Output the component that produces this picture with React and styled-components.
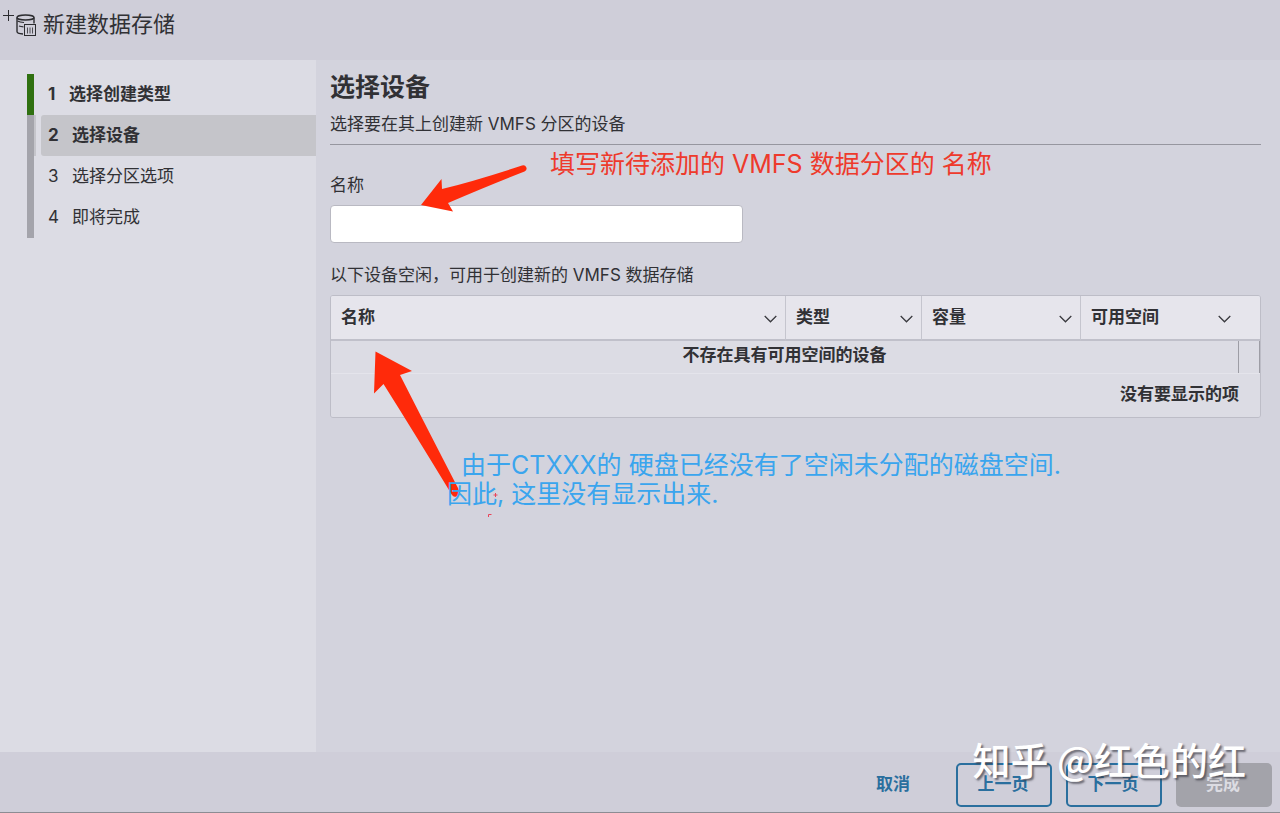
import React from 'react';
import styled, { createGlobalStyle } from 'styled-components';

const GlobalStyle = createGlobalStyle`
  * {
    box-sizing: border-box;
  }

  body {
    margin: 0;
    color: #313135;
    background: #d3d3dd;
    font-family: Inter, "Noto Sans CJK SC", sans-serif;
    font-size: 17px;
    line-height: 24px;
  }

  button,
  input {
    font: inherit;
  }
`;

const StyledPage = styled.div`
  position: relative;
  display: flex;
  flex-direction: column;
  min-height: 100vh;
  overflow: hidden;
`;

const StyledHeader = styled.header`
  display: flex;
  gap: 5px;
  height: 60px;
  padding: 0 2px;
  background: #cfced9;
`;

const StyledTitle = styled.h1`
  margin: 0;
  font-size: 22px;
  font-weight: 400;
  line-height: 48px;
`;

const StyledTitleIcon = styled.svg`
  width: 36px;
  height: 44px;
  fill: none;
  stroke: #2c2c30;
`;

const StyledBody = styled.div`
  display: flex;
  flex: 1;
`;

const StyledSidebar = styled.nav`
  flex: 0 0 316px;
  padding: 14px 0 0 27px;
  background: #dcdce4;
`;

const StyledSteps = styled.ol`
  margin: 0;
  padding: 0;
  list-style: none;
`;

const StyledStep = styled.li`
  display: flex;
  gap: 5px;
  border-left: 7px solid ${props => (props.$done ? '#2f7010' : '#a4a4ab')};

  &::before {
    content: '';
    width: 2px;
    background: ${props => (props.$active ? '#c5c5cb' : 'transparent')};
  }
`;

const StyledStepLabel = styled.div`
  display: flex;
  flex: 1;
  gap: ${props => (props.$done ? '11px' : '14px')};
  padding-left: 7px;
  border-radius: 3px 0 0 3px;
  line-height: 41px;
  font-weight: ${props => (props.$strong ? 700 : 400)};
  background: ${props => (props.$active ? '#c5c5ca' : 'transparent')};
`;

const StyledStepNumber = styled.span`
  width: 10px;
`;

const StyledMain = styled.main`
  flex: 1;
  padding: 9px 19px 0 14px;
`;

const StyledHeading = styled.h2`
  margin: 0;
  font-size: 25px;
  line-height: 36px;
`;

const StyledSubheading = styled.p`
  margin: 0;
  padding: 7px 0 8px;
  border-bottom: 1px solid #96969f;
`;

const StyledField = styled.div`
  display: flex;
  flex-direction: column;
  gap: 8px;
  padding: 28px 0 20px;
`;

const StyledInput = styled.input`
  width: 413px;
  max-width: 100%;
  height: 38px;
  padding: 0 10px;
  border: 1px solid #b9b9c2;
  border-radius: 4px;
  background: #fff;
  outline: none;
`;

const StyledHint = styled.p`
  margin: 0 0 8px;
`;

const StyledGrid = styled.div`
  border: 1px solid #bdbdc7;
  border-radius: 3px;
  overflow: hidden;
`;

const StyledTable = styled.table`
  width: 100%;
  table-layout: fixed;
  border-collapse: separate;
  border-spacing: 0;
  background: #dcdce4;
`;

const StyledTh = styled.th`
  padding: 0 8px 0 10px;
  border-left: ${props => (props.$first ? 'none' : '1px solid #c5c5ce')};
  border-bottom: 2px solid #c0c0ca;
  background: #e6e5ec;
`;

const StyledThInner = styled.div`
  display: flex;
  align-items: center;
  justify-content: space-between;
  height: 43px;
  padding-bottom: 2px;
  padding-right: ${props => (props.$last ? '21px' : '0')};
`;

const StyledChevron = styled.svg`
  width: 13px;
  height: 8px;
  margin-top: 4px;
  fill: none;
  stroke: #3a3a3f;
`;

const StyledEmptyCell = styled.td`
  height: 32px;
  padding: 0 0 4px;
  text-align: center;
  font-weight: 700;
`;

const StyledScrollCell = styled.td`
  border: solid #9d9da5;
  border-width: 0 1px;
`;

const StyledFootCell = styled.td`
  height: 44px;
  padding: 0 21px 3px 0;
  border-top: 1px solid #e4e4eb;
  text-align: right;
  font-weight: 700;
`;

const StyledFooter = styled.footer`
  display: flex;
  justify-content: flex-end;
  gap: 14px;
  padding: 11px 8px 5px;
  border-bottom: 1px solid #8c8c93;
  background: #cfced9;
`;

const StyledButton = styled.button`
  width: 96px;
  height: 44px;
  padding: 0 2px 2px 0;
  border: 2px solid ${props => (props.$outline ? '#2a6f9e' : 'transparent')};
  border-radius: 5px;
  color: #2a6f9e;
  background: transparent;
  font-weight: 600;

  &:disabled {
    color: #dcdce2;
    background: #a3a3aa;
  }
`;

const StyledNote = styled.p`
  position: absolute;
  top: ${props => props.$top}px;
  left: ${props => props.$left}px;
  margin: 0;
  color: ${props => props.$color};
  font-size: 25px;
  font-weight: 400;
  line-height: 29px;
  white-space: pre;
`;

const StyledArrows = styled.svg`
  position: absolute;
  top: 150px;
  left: 360px;
  width: 180px;
  height: 380px;
  pointer-events: none;
`;

const StyledWatermark = styled.div`
  position: absolute;
  right: 34px;
  bottom: 29px;
  color: #fff;
  font-family: "Noto Sans CJK SC", sans-serif;
  font-size: 38px;
  font-weight: 500;
  line-height: 50px;
  text-shadow: 2px 2px 2px rgba(60, 60, 70, 0.7);
  pointer-events: none;
`;

const steps = [
  { label: '选择创建类型', done: true },
  { label: '选择设备', active: true },
  { label: '选择分区选项' },
  { label: '即将完成' },
];

const columns = ['名称', '类型', '容量', '可用空间'];

const TitleIcon = () => (
  <StyledTitleIcon viewBox="0 0 36 44" aria-hidden="true">
    <path d="M1 15.5h11M6.5 10v11" strokeWidth="1" />
    <ellipse cx="23.5" cy="17.5" rx="8.5" ry="2.5" strokeWidth="1.4" />
    <path d="M15 17.5v14c0 1.5 3 2.3 6 2.5M32 17.5v6" strokeWidth="1.4" />
    <path d="M15.5 21c2 1.2 4 1.4 6.5 1.5M17 26c1.5.6 3 .8 4.5.9" strokeWidth="1.2" />
    <rect x="22.5" y="24.5" width="11" height="11" strokeWidth="1" />
    <path d="M25.5 27.5v6M28 27.5v6M30.5 27.5v6" strokeWidth="0.8" />
  </StyledTitleIcon>
);

const Chevron = () => (
  <StyledChevron viewBox="0 0 13 8" aria-hidden="true">
    <path d="M.7 1l5.8 5.8L12.3 1" strokeWidth="1.3" />
  </StyledChevron>
);

const Steps = () => (
  <StyledSidebar>
    <StyledSteps>
      {steps.map((step, i) => (
        <StyledStep key={step.label} $done={step.done} $active={step.active}>
          <StyledStepLabel $done={step.done} $active={step.active} $strong={step.done || step.active}>
            <StyledStepNumber>{i + 1}</StyledStepNumber>
            <span>{step.label}</span>
          </StyledStepLabel>
        </StyledStep>
      ))}
    </StyledSteps>
  </StyledSidebar>
);

const DeviceTable = () => (
  <StyledGrid>
    <StyledTable>
      <colgroup>
        <col />
        <col width="136" />
        <col width="159" />
        <col width="158" />
        <col width="22" />
      </colgroup>
      <thead>
        <tr>
          {columns.map((name, i) => (
            <StyledTh key={name} scope="col" $first={i === 0} colSpan={i === 3 ? 2 : 1}>
              <StyledThInner $last={i === 3}>
                {name}
                <Chevron />
              </StyledThInner>
            </StyledTh>
          ))}
        </tr>
      </thead>
      <tbody>
        <tr>
          <StyledEmptyCell colSpan={4}>不存在具有可用空间的设备</StyledEmptyCell>
          <StyledScrollCell />
        </tr>
      </tbody>
      <tfoot>
        <tr>
          <StyledFootCell colSpan={5}>没有要显示的项</StyledFootCell>
        </tr>
      </tfoot>
    </StyledTable>
  </StyledGrid>
);

const Arrows = () => (
  <StyledArrows viewBox="360 150 180 380" aria-hidden="true">
    <g fill="#ff2a0a">
      <path d="M421 205L441.5 179L442 189Q475 181 522 165.500A3 3 0 0 1 524.5 171.5Q490 185 448 203L453 211.5Z" />
      <path d="M375.5 351.5L412 371L400 375Q428 430 459 490A4 4 0 0 1 452 495Q415 434 383.5 384L374 393.5Z" />
    </g>
    <path d="M493.5 495h4M495.5 493v4M488.5 517v-2.5h3" fill="none" stroke="#e8455a" />
  </StyledArrows>
);

const App = () => (
  <StyledPage>
    <GlobalStyle />
    <StyledHeader>
      <TitleIcon />
      <StyledTitle>新建数据存储</StyledTitle>
    </StyledHeader>

    <StyledBody>
      <Steps />
      <StyledMain>
        <StyledHeading>选择设备</StyledHeading>
        <StyledSubheading>选择要在其上创建新 VMFS 分区的设备</StyledSubheading>
        <StyledField>
          <label htmlFor="name">名称</label>
          <StyledInput id="name" type="text" />
        </StyledField>
        <StyledHint>以下设备空闲，可用于创建新的 VMFS 数据存储</StyledHint>
        <DeviceTable />
      </StyledMain>
    </StyledBody>

    <StyledFooter>
      <StyledButton type="button">取消</StyledButton>
      <StyledButton type="button" $outline>上一页</StyledButton>
      <StyledButton type="button" $outline>下一页</StyledButton>
      <StyledButton type="button" disabled>完成</StyledButton>
    </StyledFooter>

    <Arrows />
    <StyledNote $top={150} $left={550} $color="#ee3a2c">填写新待添加的 VMFS 数据分区的 名称</StyledNote>
    <StyledNote $top={451} $left={447} $color="#3aa5ee">
      {'  由于CTXXX的 硬盘已经没有了空闲未分配的磁盘空间.\n因此, 这里没有显示出来.'}
    </StyledNote>
    <StyledWatermark>知乎 @红色的红</StyledWatermark>
  </StyledPage>
);

export default App;
